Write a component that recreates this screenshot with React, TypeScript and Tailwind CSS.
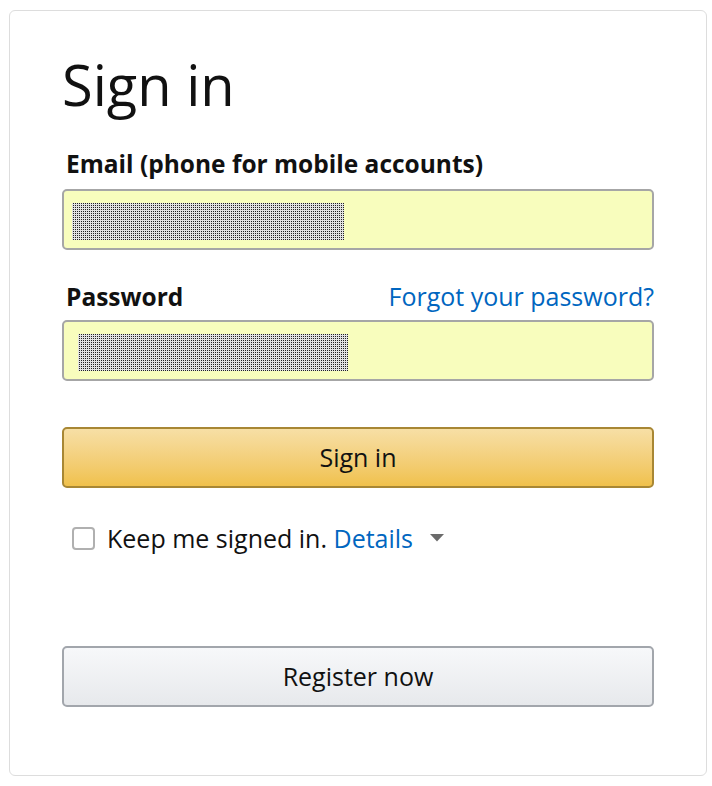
import React from "react";

const dots =
  "bg-[#e2e2e2] bg-[conic-gradient(#222_25%,transparent_0_50%,transparent_0_100%)] bg-[length:2px_2px]";

export default function App() {
  return (
    <div className="bg-white min-h-[786px] pl-[9px] pt-[10px] font-['Open_Sans',_sans-serif] text-[#111]">
      <div className="w-[698px] h-[766px] border border-[#dddddd] rounded-[6px] px-[52px] pt-[40px]">
        <h1 className="text-[56px] leading-[66px] font-normal">Sign in</h1>
        <div className="mt-[32px] text-[24.5px] leading-[30px] font-bold ml-[4px]">
          Email (phone for mobile accounts)
        </div>
        <div className="mt-[10px] h-[61px] w-[592px] rounded-[5px] border-2 border-[#a6a6a6] bg-[#f8fdbd] pt-[12px] pl-[8px]">
          <div className={`${dots} w-[272px] h-[37px]`} />
        </div>
        <div className="mt-[31px] flex items-baseline justify-between">
          <span className="text-[24.5px] leading-[30px] font-bold ml-[4px]">Password</span>
          <span className="text-[25px] leading-[30px] text-[#0066c0]">Forgot your password?</span>
        </div>
        <div className="mt-[8px] h-[61px] w-[592px] rounded-[5px] border-2 border-[#a6a6a6] bg-[#f8fdbd] pt-[12px] pl-[14px]">
          <div className={`${dots} w-[270px] h-[37px]`} />
        </div>
        <button className="mt-[46px] h-[61px] w-[592px] rounded-[5px] border-2 border-[#a88734] bg-gradient-to-b from-[#f7dfa5] to-[#f0c14b] text-[25px] text-[#111] flex items-center justify-center">
          Sign in
        </button>
        <div className="mt-[35px] flex items-center">
          <span className="ml-[10px] w-[23px] h-[23px] rounded-[4px] border-2 border-[#b0b0b0] bg-white" />
          <span className="ml-[12px] text-[25px] leading-[30px]">
            Keep me signed in. <span className="text-[#0066c0]">Details</span>
          </span>
          <svg className="ml-[17px]" width="14" height="8" viewBox="0 0 14 8">
            <path d="M0 0 H14 L7 7.5 Z" fill="#6b6b6b" />
          </svg>
        </div>
        <button className="mt-[93px] h-[61px] w-[592px] rounded-[5px] border-2 border-[#a2a6ac] bg-gradient-to-b from-[#f7f8fa] to-[#e7e9ec] text-[25px] text-[#111] flex items-center justify-center">
          Register now
        </button>
      </div>
    </div>
  );
}
